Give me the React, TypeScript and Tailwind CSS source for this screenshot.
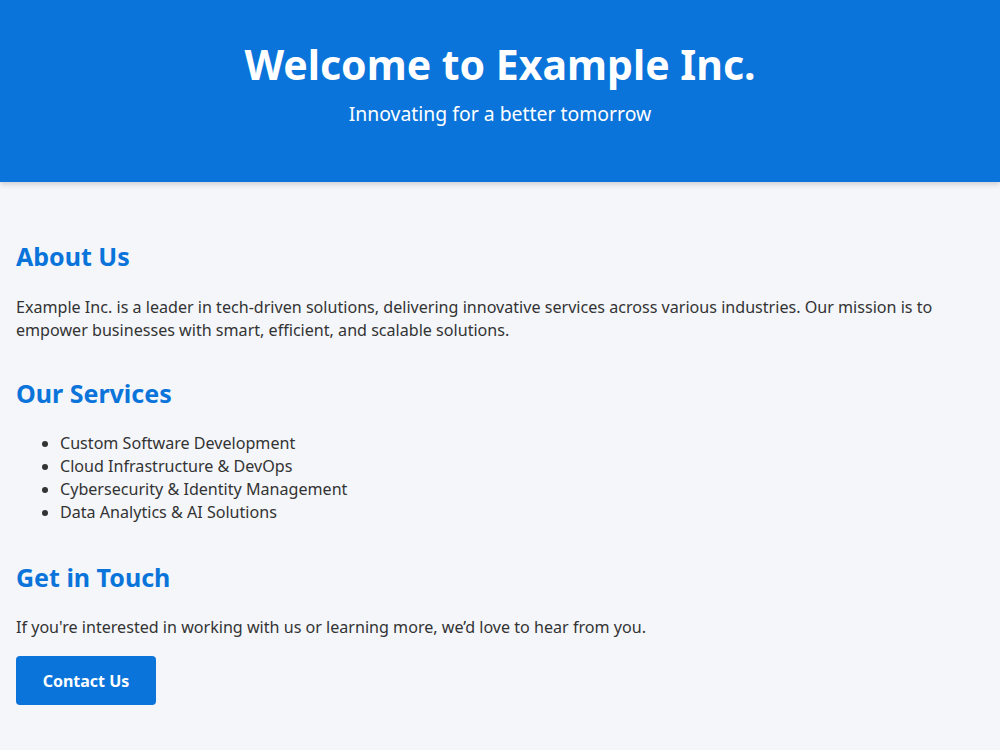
export default function App() {
  const services = [
    "Custom Software Development",
    "Cloud Infrastructure & DevOps",
    "Cybersecurity & Identity Management",
    "Data Analytics & AI Solutions",
  ];
  return (
    <div
      className="min-h-[750px] bg-[#f4f6fa] text-[#333333]"
      style={{ fontFamily: '"Noto Sans", "Open Sans", sans-serif' }}
    >
      <header className="h-[182px] bg-[#0a74da] text-white flex flex-col items-center pt-[37px] shadow-[0_2px_6px_rgba(0,0,0,0.18)] relative">
        <h1 className="text-[41px] leading-[54px] font-bold">Welcome to Example Inc.</h1>
        <p className="text-[19.4px] leading-[26px] mt-[10px]">Innovating for a better tomorrow</p>
      </header>
      <main className="px-4 pt-[58px] pb-8">
        <h2 className="text-[25px] leading-[32px] font-bold text-[#0a74da]">About Us</h2>
        <p className="text-[16.1px] leading-[23px] mt-[24px]">
          Example Inc. is a leader in tech-driven solutions, delivering innovative services across various industries. Our mission is to empower businesses with smart, efficient, and scalable solutions.
        </p>
        <h2 className="text-[25px] leading-[32px] font-bold text-[#0a74da] mt-[35px]">Our Services</h2>
        <ul className="list-disc pl-[44px] mt-[23px] text-[16.1px] leading-[23px]">
          {services.map((s) => (
            <li key={s}>{s}</li>
          ))}
        </ul>
        <h2 className="text-[25px] leading-[32px] font-bold text-[#0a74da] mt-[37px]">Get in Touch</h2>
        <p className="text-[16.1px] leading-[23px] mt-[23px]">
          If you're interested in working with us or learning more, we’d love to hear from you.
        </p>
        <button className="mt-[17px] h-[49px] w-[140px] rounded-[4px] bg-[#0a74da] text-white font-bold text-[16px]">
          Contact Us
        </button>
      </main>
    </div>
  );
}
